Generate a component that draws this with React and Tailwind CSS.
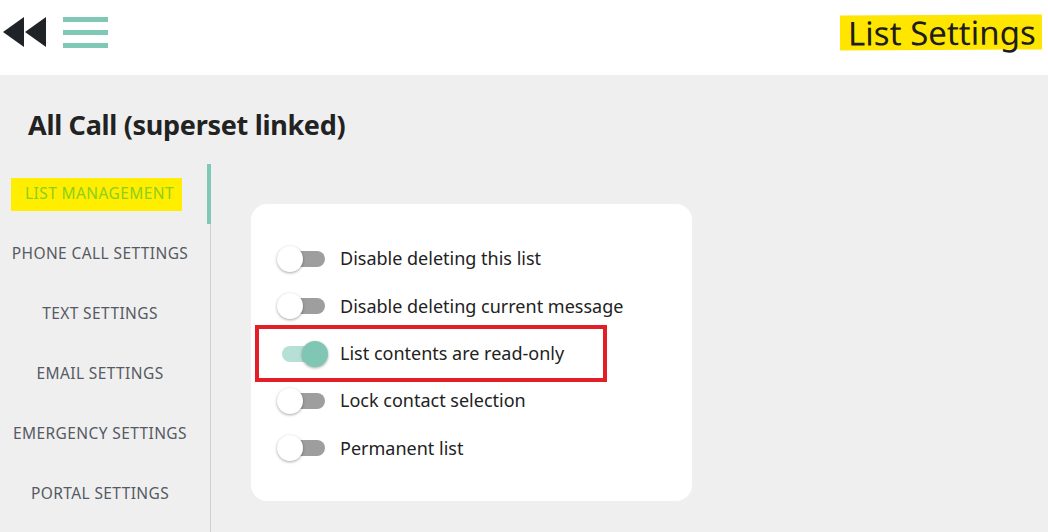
import React, { useState } from 'react';

const font = { fontFamily: '"Source Sans Pro", "Noto Sans", "Open Sans", sans-serif' };

const navItems = [
  'LIST MANAGEMENT',
  'PHONE CALL SETTINGS',
  'TEXT SETTINGS',
  'EMAIL SETTINGS',
  'EMERGENCY SETTINGS',
  'PORTAL SETTINGS',
];

const Toggle = ({ on, onClick }) => (
  <button onClick={onClick} className="relative w-[52px] h-[26px] shrink-0">
    <span
      className={`absolute left-[5px] top-[5px] w-[43px] h-[16px] rounded-full ${
        on ? 'bg-[#b6e0d5]' : 'bg-[#9e9e9e]'
      }`}
    />
    <span
      className={`absolute top-0 w-[26px] h-[26px] rounded-full shadow-[0_1px_3px_rgba(0,0,0,0.35)] ${
        on ? 'left-[25px] bg-[#7fc6b5]' : 'left-0 bg-white'
      }`}
    />
  </button>
);

const App = () => {
  const [active, setActive] = useState(0);
  const [settings, setSettings] = useState([
    { label: 'Disable deleting this list', on: false },
    { label: 'Disable deleting current message', on: false },
    { label: 'List contents are read-only', on: true, marked: true },
    { label: 'Lock contact selection', on: false },
    { label: 'Permanent list', on: false },
  ]);

  const flip = (i) =>
    setSettings((s) => s.map((x, j) => (j === i ? { ...x, on: !x.on } : x)));

  return (
    <div className="w-[1048px] h-[532px] overflow-hidden bg-[#efefef] text-[#222]" style={font}>
      {/* HEADER */}
      <div className="h-[75px] bg-white flex items-center justify-between pl-[3px] pr-[6px] pb-[11px]">
        <div className="flex items-center gap-[17px]">
          <svg width="43" height="30" viewBox="0 0 43 30">
            <polygon points="0,15 21,0 21,30" fill="#1f2328" />
            <polygon points="22,15 43,0 43,30" fill="#1f2328" />
          </svg>
          <div className="flex flex-col gap-[8px] w-[45px]">
            <span className="block h-[5px] bg-[#80c8b6]" />
            <span className="block h-[5px] bg-[#80c8b6]" />
            <span className="block h-[5px] bg-[#80c8b6]" />
          </div>
        </div>
        <div className="bg-[#ffe600] h-[35px] pl-[8px] pr-[6px] flex items-center text-[33px] leading-none text-[#1d1d1d] -rotate-[0.3deg]">
          List Settings
        </div>
      </div>

      <h1 className="pl-[28px] pt-[32px] text-[27px] tracking-[-0.3px] leading-[36px] font-bold text-[#222]">
        All Call (superset linked)
      </h1>

      <div className="flex mt-[21px]">
        {/* SIDEBAR */}
        <div className="w-[211px] border-r border-[#cfcfcf] h-[400px] flex flex-col">
          {navItems.map((item, i) => (
            <button
              key={item}
              onClick={() => setActive(i)}
              className={`relative h-[60px] pr-[10px] flex items-center justify-center text-[15.5px] tracking-[0.4px] ${
                i === 0 ? 'text-[#8ccf1c]' : 'text-[#555a63]'
              }`}
            >
              {i === 0 ? (
                <span className="bg-[#ffee00] pl-[14px] pr-[8px] h-[33px] flex items-center -ml-[7px]">
                  {item}
                </span>
              ) : (
                item
              )}
              {active === i && (
                <span className="absolute right-[-1px] top-0 w-[4px] h-[60px] bg-[#80c8b6]" />
              )}
            </button>
          ))}
        </div>

        {/* CARD */}
        <div className="pl-[40px] pt-[40px]">
          <div className="w-[441px] h-[297px] bg-white rounded-[16px] pt-[31px] px-[26px]">
            <div className="flex flex-col">
              {settings.map((s, i) => (
                <div
                  key={s.label}
                  className={`flex items-center gap-[11px] h-[47.5px] ${
                    s.marked ? 'outline-4 outline-[#e41e26] -outline-offset-4 -ml-[22px] pl-[22px] w-[352px] h-[57px] -my-[5px]' : ''
                  }`}
                >
                  <Toggle on={s.on} onClick={() => flip(i)} />
                  <span className="text-[18px] text-[#222]">{s.label}</span>
                </div>
              ))}
            </div>
          </div>
        </div>
      </div>
    </div>
  );
};

export default App;
